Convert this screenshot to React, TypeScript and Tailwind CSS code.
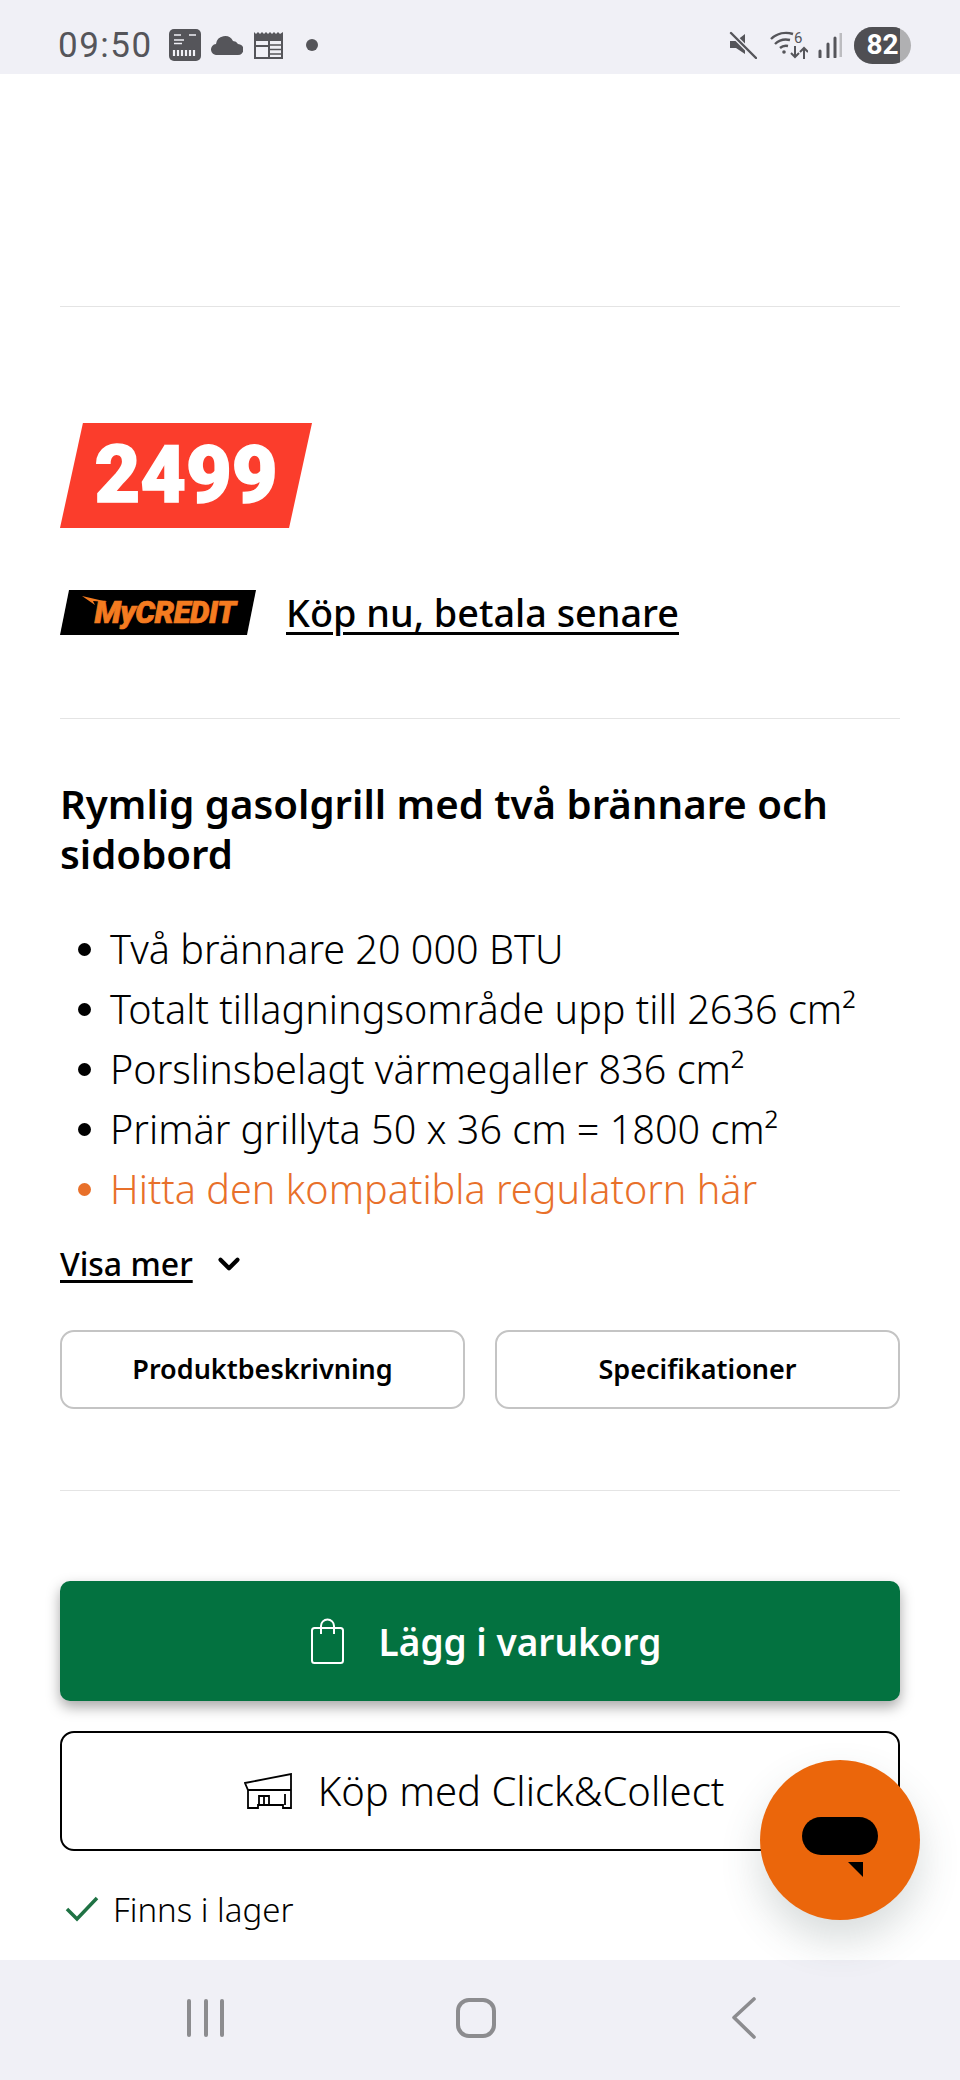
import React from "react";
import { ChevronDown } from "lucide-react";

const bullets = [
  { text: "Två brännare 20 000 BTU" },
  { text: "Totalt tillagningsområde upp till 2636 cm²" },
  { text: "Porslinsbelagt värmegaller 836 cm²" },
  { text: "Primär grillyta 50 x 36 cm = 1800 cm²" },
];

function StatusBar() {
  return (
    <div className="h-[74px] shrink-0 bg-[#f0f0f6] flex items-center justify-between pt-[16px] pl-[58px] pr-[49px] text-[#55555a]">
      <div className="flex items-center">
        <span className="font-['Roboto',sans-serif] text-[35px] font-normal leading-none w-[111px] tracking-[1.5px]">09:50</span>
        <svg width="32" height="32" viewBox="0 0 32 32">
          <rect width="32" height="32" rx="5" fill="#55555a" />
          <path d="M5 6h7M20 6h7M5 11h10M5 14.5h8" stroke="#f0f0f6" strokeWidth="1.6" />
          <path d="M5 21v6M9 21v6M13 21v6M17 21v6M21 21v6M25 21v6" stroke="#f0f0f6" strokeWidth="2.2" />
        </svg>
        <svg width="32" height="20" viewBox="0 0 32 20" className="ml-[10px]">
          <path d="M6 20a5.5 5.5 0 0 1-1-11 9 9 0 0 1 17-3 6 6 0 0 1 5 3 5.5 5.5 0 0 1 0 11z" fill="#55555a" />
        </svg>
        <svg width="29" height="27" viewBox="0 0 29 27" className="ml-[11px]">
          <path d="M0 0l2 2 2-2 2 2 2-2 2 2 2-2 2 2 2-2 2 2 2-2 2 2 2-2 2 2 3-2v9H0z" fill="#55555a" />
          <rect x="1" y="8" width="27" height="18" fill="none" stroke="#55555a" strokeWidth="2" />
          <path d="M15 9v17M1 14h14" stroke="#55555a" strokeWidth="2" />
          <path d="M16 13h12M16 17.5h12M16 22h12" stroke="#55555a" strokeWidth="1.6" />
        </svg>
        <span className="ml-[23px] w-[12px] h-[12px] rounded-full bg-[#55555a]" />
      </div>
      <div className="flex items-center">
        <svg width="28" height="28" viewBox="0 0 28 28">
          <path d="M1 10h6l9-7v20l-9-6H1z" fill="#55555a" />
          <path d="M2 2l24 24" stroke="#f0f0f6" strokeWidth="5" />
          <path d="M2 2l25 25" stroke="#55555a" strokeWidth="2.4" strokeLinecap="round" />
        </svg>
        <svg width="38" height="30" viewBox="0 0 38 30" className="ml-[13px]">
          <path d="M1 9a22 22 0 0 1 22-5M5 14a16 16 0 0 1 15-4M10 18a9 9 0 0 1 8-2" fill="none" stroke="#55555a" strokeWidth="2.4" />
          <circle cx="14" cy="22" r="1.8" fill="#55555a" />
          <path d="M25 16v11M21 23l4 4 4-4M34 29V18M30 22l4-4 4 4" fill="none" stroke="#55555a" strokeWidth="2" />
          <text x="24" y="13" fontSize="15" fontFamily="Roboto" fill="#55555a">6</text>
        </svg>
        <svg width="24" height="26" viewBox="0 0 24 26" className="ml-[10px]">
          <path d="M2 19v6M10 12v13M17 6v19" stroke="#55555a" strokeWidth="3" strokeLinecap="round" />
          <path d="M23 1v24" stroke="#bcbcc0" strokeWidth="3" />
        </svg>
        <div className="ml-[12px] relative w-[57px] h-[37px] rounded-full overflow-hidden bg-[#b0b0b2]">
          <div className="absolute inset-y-0 left-0 w-[46px] bg-[#4f4f53]" />
          <span className="absolute inset-0 flex items-center justify-center font-['Roboto',sans-serif] font-bold text-[28px] text-white">82</span>
        </div>
      </div>
    </div>
  );
}

function NavBar() {
  return (
    <div className="h-[120px] shrink-0 bg-[#f0f0f6] flex items-center pb-[4px] pl-[187px]">
      <div className="flex items-center gap-[12.5px]">
        <span className="w-[4px] h-[38px] rounded-full bg-[#8c8c8f]" />
        <span className="w-[4px] h-[38px] rounded-full bg-[#8c8c8f]" />
        <span className="w-[4px] h-[38px] rounded-full bg-[#8c8c8f]" />
      </div>
      <span className="ml-[232px] w-[40px] h-[40px] rounded-[13px] border-[4px] border-[#8c8c8f]" />
      <svg width="26" height="42" viewBox="0 0 26 42" className="ml-[235px]">
        <path d="M23 2L3 20.5 23 40" fill="none" stroke="#8c8c8f" strokeWidth="3.6" strokeLinecap="round" strokeLinejoin="round" />
      </svg>
    </div>
  );
}

export default function App() {
  return (
    <div className="relative w-[960px] h-[2080px] overflow-hidden bg-white flex flex-col text-black font-['Noto_Sans',sans-serif]">
      <StatusBar />

      <main className="flex-1 px-[60px] min-h-0">
        <div className="mt-[232px] border-t border-[#e4e4e4]" />

        {/* price tag */}
        <div className="mt-[116px] w-[252px] h-[105px] bg-[#fb3d2c] [clip-path:polygon(9.1%_0,100%_0,90.9%_100%,0_100%)] flex items-center justify-center">
          <span className="font-['Roboto',sans-serif] font-black text-[79px] leading-none text-white [-webkit-text-stroke:1.5px_white]">2499</span>
        </div>

        <div className="mt-[62px] flex items-center h-[45px]">
          <div className="relative w-[196px] h-[45px] pl-[14px] bg-black [clip-path:polygon(4.6%_0,100%_0,95.4%_100%,0_100%)] flex items-center justify-center">
            <svg width="26" height="9" viewBox="0 0 26 9" className="absolute left-[22px] top-[6px]">
              <path d="M0 0l26 6-15-1 2 4z" fill="#f47b20" />
            </svg>
            <span className="font-['Roboto',sans-serif] italic font-black text-[31px] leading-none text-[#f47b20] tracking-[-0.5px] [-webkit-text-stroke:0.7px_#f47b20]">MyCREDIT</span>
          </div>
          <a className="ml-[30px] text-[37.8px] font-medium underline underline-offset-[5px] decoration-[3px] leading-none">Köp nu, betala senare</a>
        </div>

        <div className="mt-[83px] border-t border-[#e4e4e4]" />

        <h1 className="mt-[60px] text-[40.2px] font-semibold leading-[50px]">Rymlig gasolgrill med två brännare och sidobord</h1>

        <ul className="mt-[40px] pl-[18px] text-[39.6px] font-light leading-[60px]">
          {bullets.map((b) => (
            <li key={b.text} className="flex items-center">
              <span className="w-[13px] h-[13px] rounded-full bg-black mr-[19px]" />
              {b.text}
            </li>
          ))}
          <li className="flex items-center text-[#e8702a]">
            <span className="w-[13px] h-[13px] rounded-full bg-[#e8702a] mr-[19px]" />
            Hitta den kompatibla regulatorn här
          </li>
        </ul>

        <div className="mt-[23px] flex items-center h-[44px]">
          <a className="text-[32px] font-medium underline underline-offset-[4px] decoration-[3px]">Visa mer</a>
          <ChevronDown className="ml-[19px] w-[34px] h-[34px]" strokeWidth={3} />
        </div>

        <div className="mt-[44px] flex gap-[30px]">
          <button className="flex-1 h-[79px] rounded-[14px] border-2 border-[#c4c4c4] bg-white text-[27px] font-semibold">Produktbeskrivning</button>
          <button className="flex-1 h-[79px] rounded-[14px] border-2 border-[#c4c4c4] bg-white text-[27px] font-semibold">Specifikationer</button>
        </div>

        <div className="mt-[81px] border-t border-[#e4e4e4]" />

        <button className="mt-[90px] w-full h-[120px] rounded-[10px] bg-[#037240] shadow-[0_6px_14px_rgba(0,0,0,0.35)] flex items-center justify-center pl-[12px] text-white">
          <svg width="33" height="46" viewBox="0 0 33 46" fill="none" stroke="white" strokeWidth="2">
            <rect x="1" y="10" width="31" height="35" rx="2.5" />
            <path d="M10 16V8a6.5 6.5 0 0 1 13 0v8" />
          </svg>
          <span className="ml-[35px] text-[37px] font-semibold leading-none">Lägg i varukorg</span>
        </button>

        <button className="mt-[30px] w-full h-[120px] rounded-[14px] border-2 border-black bg-white flex items-center justify-center pl-[8px]">
          <svg width="48" height="36" viewBox="0 0 48 36" fill="none" stroke="black" strokeWidth="1.8">
            <path d="M1 10L47 1v16H4zM4 17v18h10v-3h25v3h8V17M15 32V23h10v9M20 23v9M41 21v11" />
          </svg>
          <span className="ml-[26px] text-[40px] font-light leading-none">Köp med Click&amp;Collect</span>
        </button>

        <div className="mt-[38px] flex items-center pl-[5px] h-[40px]">
          <svg width="34" height="28" viewBox="0 0 34 28" fill="none" stroke="#1f7244" strokeWidth="3.5">
            <path d="M2 14l10 10L32 3" />
          </svg>
          <span className="ml-[14px] text-[33px] font-light leading-none">Finns i lager</span>
        </div>
      </main>

      <NavBar />

      {/* chat bubble */}
      <button className="absolute left-[760px] top-[1760px] w-[160px] h-[160px] rounded-full bg-[#eb660b] shadow-[0_20px_40px_rgba(60,80,80,0.2)] flex items-center justify-center">
        <svg width="76" height="62" viewBox="0 0 76 62" className="mt-[16px]">
          <rect width="76" height="38" rx="19" fill="black" />
          <path d="M46 45h15v15z" fill="black" />
        </svg>
      </button>
    </div>
  );
}
